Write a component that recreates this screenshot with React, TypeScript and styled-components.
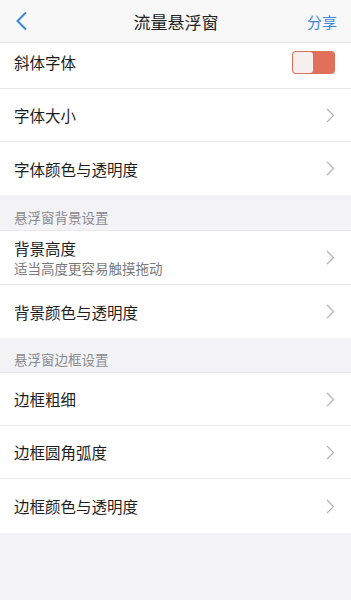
import React, { useState } from 'react'
import styled, { createGlobalStyle } from 'styled-components'

const GlobalStyle = createGlobalStyle`
  html, body {
    margin: 0;
    padding: 0;
    background: #f3f3f6;
    font-family: "Noto Sans CJK SC", "Noto Sans", sans-serif;
  }
`

const Page = styled.div`
  width: 351px;
  min-height: 600px;
  background: #f3f3f6;
`

const NavBar = styled.div`
  height: 42px;
  display: flex;
  align-items: center;
  justify-content: space-between;
  padding: 0 14px 0 15px;
  background: #f8f8f8;
  border-bottom: 1px solid #e4e4e6;
`

const BackButton = styled.button`
  width: 60px;
  border: none;
  background: none;
  padding: 0;
  display: flex;
  align-items: center;
`

const Title = styled.div`
  font-size: 17px;
  color: #222;
`

const ShareButton = styled.button`
  width: 60px;
  border: none;
  background: none;
  padding: 0;
  text-align: right;
  font-family: inherit;
  font-size: 15px;
  color: #3b86d8;
`

const Group = styled.div`
  background: #fff;
`

const Row = styled.div<{ $height?: number; $lift?: number }>`
  height: ${({ $height }) => $height || 53}px;
  box-sizing: border-box;
  display: flex;
  align-items: center;
  justify-content: space-between;
  padding: 0 16px ${({ $lift }) => $lift || 0}px 14px;
  border-bottom: 1px solid #e8e8ea;
  &:last-child {
    border-bottom: none;
  }
`

const RowText = styled.div`
  display: flex;
  flex-direction: column;
`

const Label = styled.div`
  font-size: 15.5px;
  color: #1e1e1e;
  line-height: 20px;
`

const SubLabel = styled.div`
  font-size: 13.5px;
  color: #7a7a7a;
  line-height: 18px;
  margin-top: 1px;
`

const SectionHeader = styled.div<{ $height?: number }>`
  height: ${({ $height }) => $height || 36}px;
  box-sizing: border-box;
  display: flex;
  align-items: flex-end;
  padding: 0 14px 3px;
  font-size: 13.5px;
  color: #8a8a8e;
  border-bottom: 1px solid #e8e8ea;
`

const Toggle = styled.button<{ $on: boolean }>`
  width: 43px;
  height: 23px;
  padding: 1px;
  box-sizing: border-box;
  border: none;
  border-radius: 4px;
  background: ${({ $on }) => ($on ? '#4cd964' : '#e0705c')};
  display: flex;
  justify-content: ${({ $on }) => ($on ? 'flex-end' : 'flex-start')};
`

const Knob = styled.span`
  width: 20px;
  height: 21px;
  border-radius: 3px;
  background: #f7eeee;
`

const Chevron = () => (
  <svg width="9" height="15" viewBox="0 0 9 15">
    <path d="M1 1l6.5 6.5L1 14" fill="none" stroke="#b5b5b5" strokeWidth="1.3" />
  </svg>
)

const LinkRow: React.FC<{ label: string; sub?: string; height?: number }> = ({ label, sub, height }) => (
  <Row $height={height}>
    <RowText>
      <Label>{label}</Label>
      {sub && <SubLabel>{sub}</SubLabel>}
    </RowText>
    <Chevron />
  </Row>
)

export default function App() {
  const [italic, setItalic] = useState(false)
  return (
    <Page>
      <GlobalStyle />
      <NavBar>
        <BackButton>
          <svg width="13" height="20" viewBox="0 0 13 20">
            <path d="M11 1.5L2.5 10l8.5 8.5" fill="none" stroke="#3b86d8" strokeWidth="2" />
          </svg>
        </BackButton>
        <Title>流量悬浮窗</Title>
        <ShareButton>分享</ShareButton>
      </NavBar>
      <Group>
        <Row $height={46} $lift={7}>
          <Label>斜体字体</Label>
          <Toggle $on={italic} onClick={() => setItalic(!italic)}>
            <Knob />
          </Toggle>
        </Row>
        <LinkRow label="字体大小" />
        <LinkRow label="字体颜色与透明度" />
      </Group>
      <SectionHeader>悬浮窗背景设置</SectionHeader>
      <Group>
        <LinkRow label="背景高度" sub="适当高度更容易触摸拖动" height={54} />
        <LinkRow label="背景颜色与透明度" />
      </Group>
      <SectionHeader $height={35}>悬浮窗边框设置</SectionHeader>
      <Group>
        <LinkRow label="边框粗细" />
        <LinkRow label="边框圆角弧度" />
        <LinkRow label="边框颜色与透明度" height={54} />
      </Group>
    </Page>
  )
}
